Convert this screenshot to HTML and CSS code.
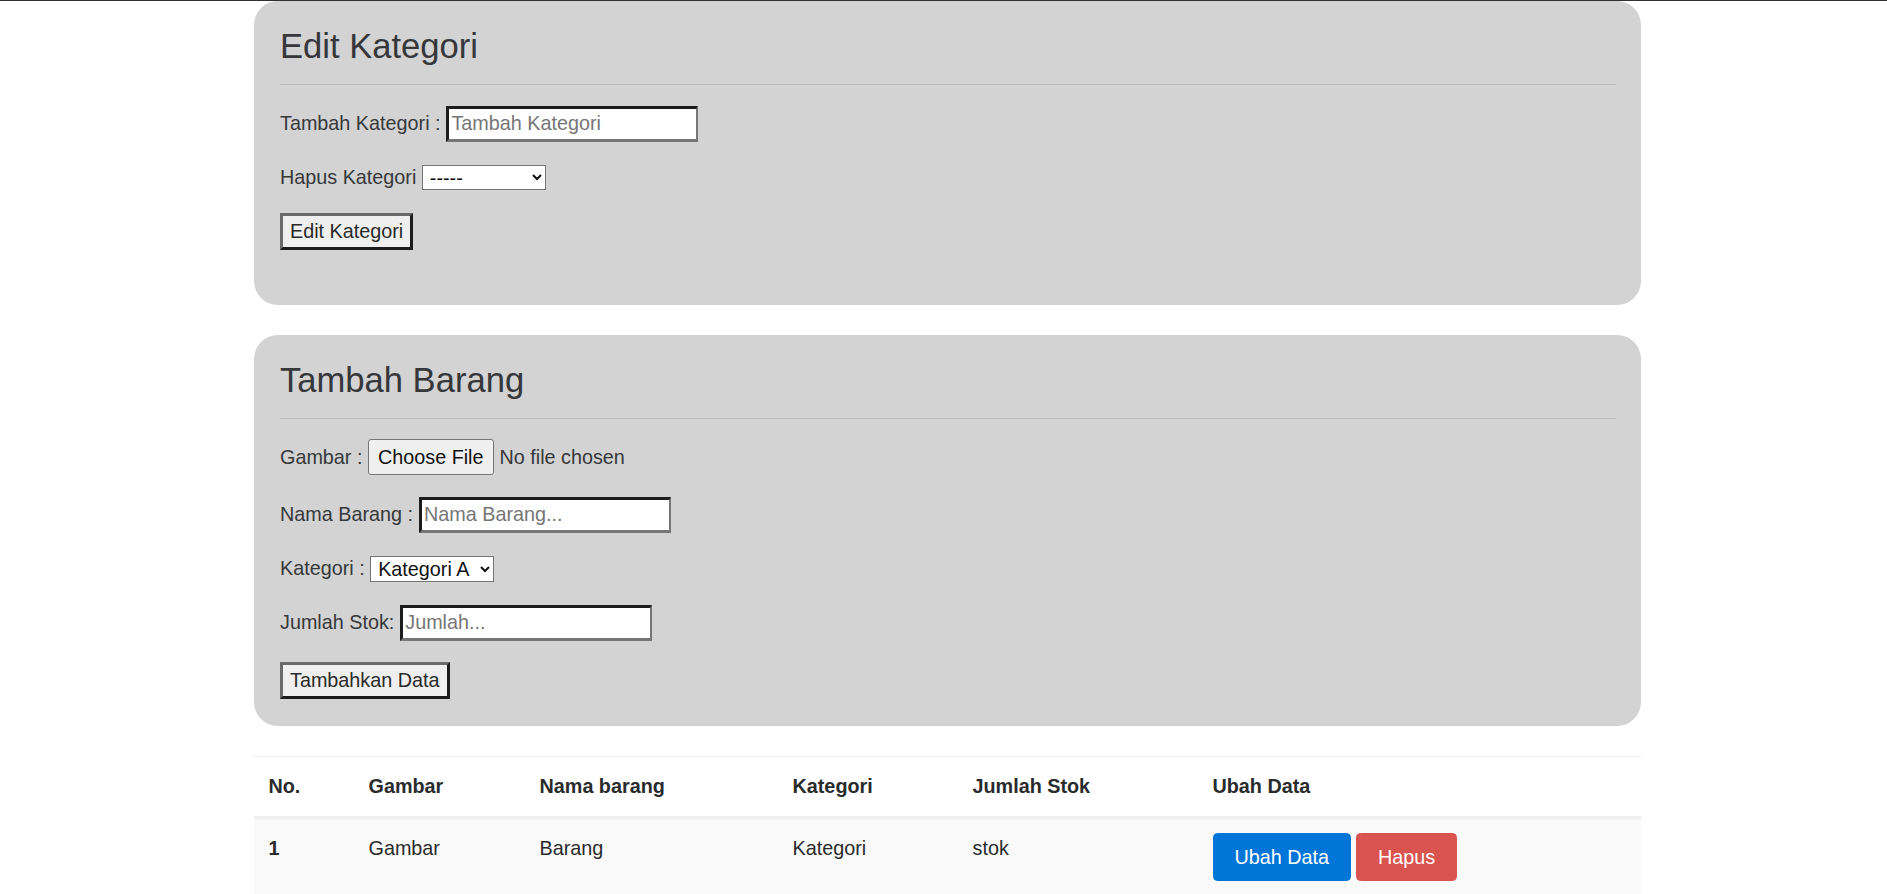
FILE: index.html
```html
<!DOCTYPE html>
<html lang="id">
<head>
<meta charset="utf-8">
<title>Inventaris Barang</title>
<link rel="stylesheet" href="styles.css">
</head>
<body>
<div class="topbar"></div>
<main class="page">
  <section class="card card-edit">
    <h3 class="card-title">Edit Kategori</h3>
    <hr class="divider">
    <form class="form">
      <div class="field">
        <label for="tambah">Tambah Kategori :</label>
        <input id="tambah" class="text-input" type="text" placeholder="Tambah Kategori">
      </div>
      <div class="field">
        <label for="hapus">Hapus Kategori</label>
        <select id="hapus" class="select">
          <option>-----</option>
          <option>Kategori A</option>
        </select>
      </div>
      <div class="field">
        <button type="button" class="plain-btn">Edit Kategori</button>
      </div>
    </form>
  </section>

  <section class="card">
    <h3 class="card-title">Tambah Barang</h3>
    <hr class="divider">
    <form class="form">
      <div class="field">
        <label>Gambar :</label>
        <span class="file">
          <button type="button" class="file-btn">Choose File</button>
          <span class="file-name">No file chosen</span>
        </span>
      </div>
      <div class="field">
        <label for="nama">Nama Barang :</label>
        <input id="nama" class="text-input" type="text" placeholder="Nama Barang...">
      </div>
      <div class="field">
        <label for="kat">Kategori :</label>
        <select id="kat" class="select">
          <option>Kategori A</option>
        </select>
      </div>
      <div class="field">
        <label for="jumlah">Jumlah Stok:</label>
        <input id="jumlah" class="text-input" type="text" placeholder="Jumlah...">
      </div>
      <div class="field">
        <button type="button" class="plain-btn">Tambahkan Data</button>
      </div>
    </form>
  </section>

  <table class="table">
    <thead>
      <tr>
        <th class="col-no">No.</th>
        <th class="col-img">Gambar</th>
        <th class="col-name">Nama barang</th>
        <th class="col-cat">Kategori</th>
        <th class="col-stock">Jumlah Stok</th>
        <th class="col-act">Ubah Data</th>
      </tr>
    </thead>
    <tbody>
      <tr>
        <th>1</th>
        <td>Gambar</td>
        <td>Barang</td>
        <td>Kategori</td>
        <td>stok</td>
        <td>
          <div class="actions">
            <button type="button" class="btn btn-primary">Ubah Data</button>
            <button type="button" class="btn btn-danger">Hapus</button>
          </div>
        </td>
      </tr>
    </tbody>
  </table>
</main>
</body>
</html>
```

FILE: styles.css
```css
* {
  box-sizing: border-box;
}

html, body {
  margin: 0;
  background: #ffffff;
}

body {
  padding-left: 8px;
  font-family: "Liberation Sans", Arial, Helvetica, sans-serif;
  font-size: 19.8px;
  line-height: 28.8px;
  color: #36383a;
}

.topbar {
  height: 1px;
  margin-left: -8px;
  background: #2c3135;
}

.page {
  max-width: 1387px;
  margin: 0 auto;
}

.card {
  background: #d3d3d3;
  border-radius: 24px;
  padding: 26px 25px 27px 26px;
  margin-bottom: 30px;
}

.card-title {
  margin: 0 0 19px;
  font-size: 34.6px;
  line-height: 1.1;
  font-weight: 400;
  color: #35373a;
}

.divider {
  margin: 0 0 20.5px;
  border: 0;
  border-top: 1px solid #bcbcbc;
  height: 0;
}

.form {
  display: flex;
  flex-direction: column;
  align-items: flex-start;
  gap: 21.5px;
  margin: 0;
}

.card-edit .form {
  padding-bottom: 28px;
}

.field {
  display: flex;
  align-items: center;
  gap: 5.5px;
  min-height: 28.8px;
}

.text-input {
  width: 252px;
  height: 36px;
  padding: 0 2.4px;
  font: inherit;
  color: #222;
  background: #fff;
  border-style: solid;
  border-width: 3px 2px 3px 3px;
  border-color: #1c1c1c #767676 #767676 #1c1c1c;
  outline: none;
}

.text-input::placeholder {
  color: #767676;
}

.select {
  width: 124px;
  height: 25.6px;
  font-family: inherit;
  font-size: 19.8px;
  color: #111;
  background: #fff;
  border: 1px solid #767676;
  border-radius: 0;
  padding: 0 0 0 3px;
}

.plain-btn {
  height: 36.5px;
  padding: 0 7px;
  font: inherit;
  color: #2a2a2a;
  background: #efefef;
  border-style: solid;
  border-width: 3px;
  border-color: #6a6a6a #1c1c1c #1c1c1c #6a6a6a;
  cursor: pointer;
}

.file {
  display: flex;
  align-items: center;
  gap: 6px;
}

.file-btn {
  height: 36px;
  padding: 0 9px;
  font: inherit;
  color: #111;
  background: #efefef;
  border: 1px solid #767676;
  border-radius: 3px;
}

.table {
  width: 100%;
  border-collapse: collapse;
  color: #292b2c;
  font-size: 19.8px;
  line-height: 30px;
}

.table th,
.table td {
  padding: 14.5px;
  text-align: left;
  vertical-align: top;
  border-top: 1px solid #eceeef;
}

.table th {
  font-weight: 700;
}

.table thead th {
  border-bottom: 3px solid #eceeef;
}

.table tbody tr {
  background: #f9f9f9;
}

.col-no { width: 100px; }
.col-img { width: 171px; }
.col-name { width: 253px; }
.col-cat { width: 180px; }
.col-stock { width: 240px; }
.col-act { width: auto; }

.actions {
  display: flex;
  gap: 5px;
}

.btn {
  height: 48px;
  padding: 11px 21px;
  font-family: inherit;
  font-size: 19.8px;
  line-height: 24px;
  color: #fff;
  border: 1px solid transparent;
  border-radius: 4.5px;
  cursor: pointer;
}

.btn-primary {
  background: #0275d8;
  border-color: #0275d8;
}

.btn-danger {
  background: #d9534f;
  border-color: #d9534f;
}
```
